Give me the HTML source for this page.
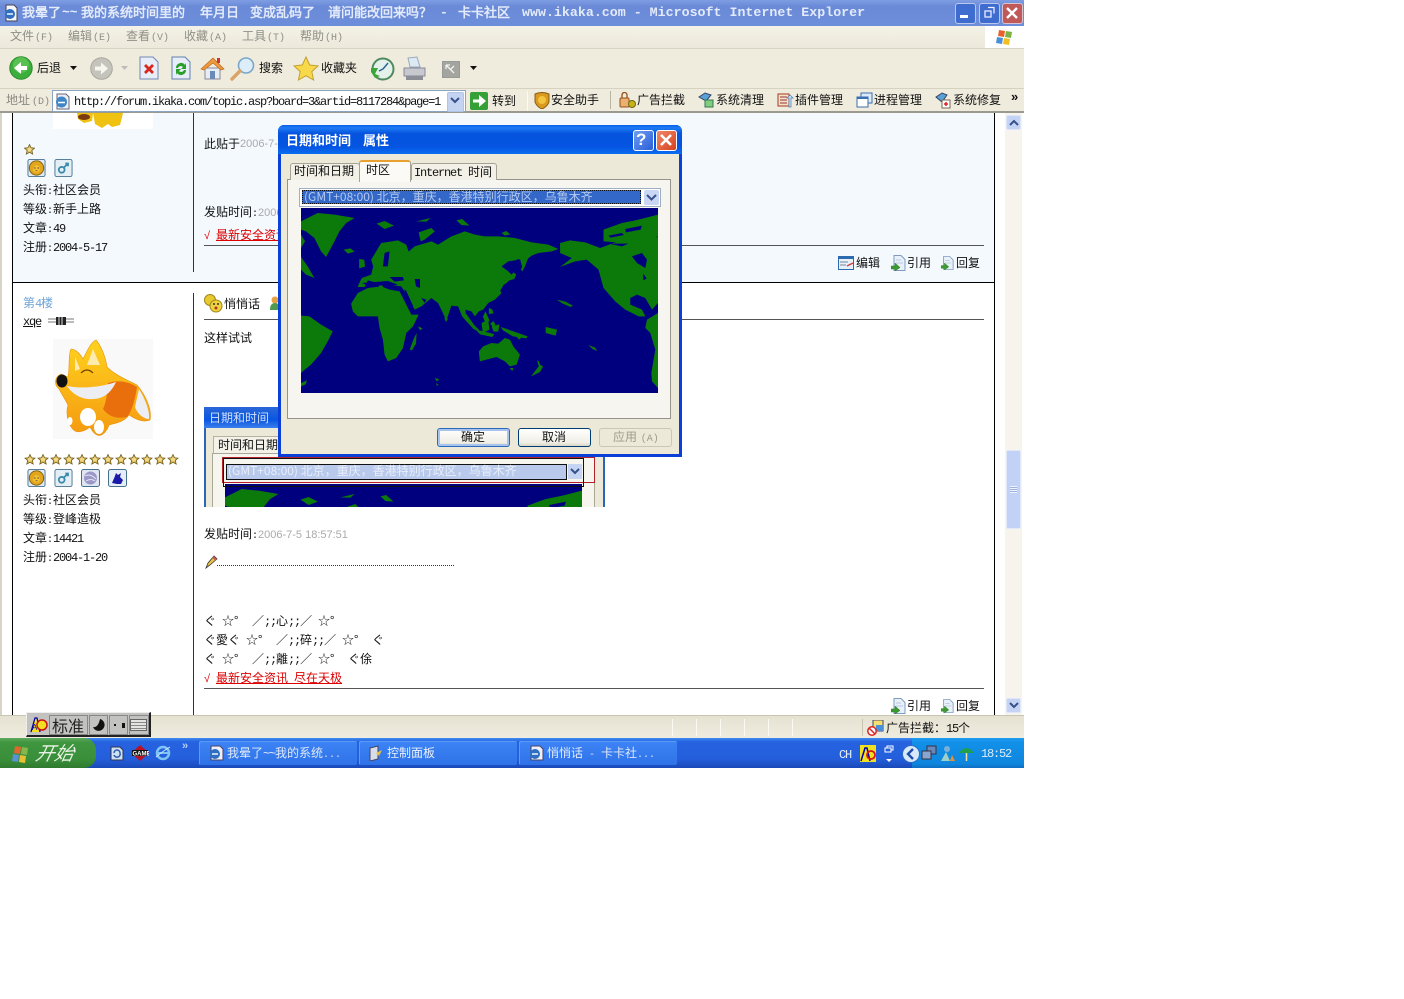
<!DOCTYPE html>
<html><head><meta charset="utf-8"><title>我晕了</title>
<style>
html,body{margin:0;padding:0;background:#fff;width:1404px;height:999px;overflow:hidden}
#s{position:absolute;left:0;top:0;width:1024px;height:768px;overflow:hidden;background:#fff}
#s div,#s span.t,#s svg{position:absolute}
.t{position:absolute;white-space:pre;font:12px/12px "WenQuanYi Zen Hei","Noto Sans CJK SC",sans-serif;color:#111}
.m{font-family:"Liberation Mono","WenQuanYi Zen Hei",monospace;font-size:12px;letter-spacing:-1.2px}
.k{font-family:"Liberation Mono",monospace;font-size:10px;letter-spacing:0;margin-left:1px}
.g{font:11px/12px "Liberation Sans",sans-serif;color:#aaa}
.r{color:#d00;text-decoration:underline}
.tt{font:bold 13px/13px "WenQuanYi Zen Hei",sans-serif;color:#e3eafa}
.tb{background:linear-gradient(#3d84f5,#2f72e8);border-radius:2px;height:24px;top:741px;width:158px;box-shadow:inset 1px 1px 0 #5a9bf8}
.btn{top:428px;height:17px;width:71px;border:1px solid #003c74;border-radius:3px;background:linear-gradient(#fff,#f0efe6 80%,#d8d5c6)}
</style></head><body>
<svg width="0" height="0" style="position:absolute">
<defs>
<symbol id="star" viewBox="0 0 12 12"><path d="M6 .5l1.7 3.6 3.8.4-2.9 2.6.9 3.9L6 9l-3.5 2 .9-3.9L.5 4.500l3.800-.4z" fill="#d9b54a" stroke="#6b5a20" stroke-width=".8"/><circle cx="6" cy="6" r="2.200" fill="#f2d98a"/></symbol>
<symbol id="lion" viewBox="0 0 20 20"><rect x=".5" y=".5" width="19" height="19" rx="2" fill="#dfeaf2" stroke="#46708f"/><circle cx="10" cy="10" r="8" fill="#e2a51c" stroke="#7a5a10"/><circle cx="10" cy="11" r="4" fill="#f2c22c"/><path d="M7 10h2M11 10h2M9 13h2" stroke="#744" stroke-width="1"/></symbol>
<symbol id="male" viewBox="0 0 20 20"><rect x=".5" y=".5" width="19" height="19" rx="2" fill="#e4eef5" stroke="#46708f"/><circle cx="8" cy="12" r="3.200" fill="none" stroke="#3a8aaa" stroke-width="2"/><path d="M10.500 9.500L15 5M12 5h3v3" fill="none" stroke="#3a8aaa" stroke-width="2"/></symbol>
<symbol id="doca" viewBox="0 0 15 16"><path d="M3 .5h7l4 4v11H3z" fill="#e8f0fa" stroke="#7f9bc0"/><path d="M5 5h5M5 8h7" stroke="#b8c8dd"/><path d="M0 11h4V8l5 4.500L4 16v-2H0z" fill="#3c9b30" stroke="#2b7a25" stroke-width=".5"/></symbol>
<linearGradient id="fg" x1="0" y1="0" x2="0" y2="1"><stop offset="0" stop-color="#ffd21e"/><stop offset="1" stop-color="#f59a10"/></linearGradient>
<symbol id="fox" viewBox="0 0 100 100"><rect width="100" height="100" fill="#f9f9f9"/>
<path d="M15 38C17 28 15 16 18 10 23 10 28 16 30 20 34 12 38 3 43 1 49 8 53 20 54 28 62 36 72 40 84 46 94 58 99 72 97 81 90 84 82 80 76 76 70 84 62 84 56 86 54 92 49 98 44 96 40 94 38 90 37 88 32 92 26 94 22 92 16 88 12 76 15 66 12 60 8 54 6 50 1 46 1 38 8 35z" fill="url(#fg)" stroke="#e8920a" stroke-width=".6"/>
<path d="M22 18L27 30 22 32zM40 10L47 26 34 26z" fill="#ffeab0"/>
<path d="M55 44C68 40 78 44 84 48 82 62 78 74 74 78 64 80 56 78 50 70 54 62 54 52 55 44z" fill="#e96f0c"/>
<path d="M14 47C30 50 48 48 63 43 58 54 50 60 40 60 30 61 20 56 14 47z" fill="#eceef4"/>
<path d="M86 50C92 60 97 72 96 80 90 80 84 74 82 68z" fill="#eceef4"/>
<ellipse cx="35" cy="78" rx="8" ry="9" fill="#fff"/><ellipse cx="46" cy="88" rx="5" ry="7" fill="#fff"/><ellipse cx="17" cy="82" rx="2.500" ry="4" fill="#fff"/>
<path d="M28 34q6-6 12 0" fill="none" stroke="#6a3c00" stroke-width="1.200"/>
<ellipse cx="9" cy="42" rx="5.500" ry="6.500" fill="#111"/></symbol>
<symbol id="map" viewBox="80 265 1068 555" preserveAspectRatio="none">
<rect x="80" y="265" width="1068" height="555" fill="#00007f"/>
<g fill="#0b7a0b">
<path d="M80 305L130 280 180 285 240 295 215 310 195 335 180 365 155 412 140 395 120 355 95 335 80 330z"/>
<path d="M80 412L100 440 120 475 95 465 80 450z"/>
<path d="M80 345L92 365 80 385z"/>
<path d="M208 390L228 386 240 396 220 402z"/>
<path d="M306 312L330 304 358 318 330 328z"/>
<path d="M432 338L470 325 480 335 450 360 438 365z"/><path d="M425 305L468 295 455 306z"/>
<path d="M545 302L562 298 584 318 560 316z"/>
<path d="M680 340L694 334 706 344 690 348z"/>
<path d="M252 495L262 475 290 465 296 440 290 420 320 370 370 362 395 375 402 396 420 380 470 365 490 375 530 350 570 335 600 345 630 350 670 350 720 355 770 368 820 375 850 388 830 395 790 400 770 408 755 420 745 450 735 420 700 425 680 440 700 455 715 470 695 490 670 505 680 520 660 540 640 550 625 570 612 575 600 590 590 575 572 570 575 605 562 590 550 560 530 558 515 602 490 550 470 535 440 560 420 570 395 525 380 500 345 495 310 490 280 482 270 502 250 502z"/>
<path d="M230 552L250 520 280 505 320 500 345 510 375 515 395 555 410 585 432 585 415 620 395 640 385 685 365 715 340 725 330 705 325 660 315 625 310 590 280 590 250 590 235 575z"/>
<path d="M405 690L418 655 426 640 424 672 412 692z"/>
<path d="M612 695L625 680 650 670 670 672 690 655 705 660 715 680 735 705 725 735 705 740 690 725 665 712 635 720 615 725z"/>
<path d="M704 745L716 745 712 754z"/>
<path d="M80 588L105 590 140 615 175 635 160 665 140 700 110 735 85 755 80 760z"/>
<path d="M80 790L98 782 94 794 80 800z"/>
<path d="M855 370L885 362 930 368 975 385 1020 368 1148 352V550L1130 570 1110 535 1085 525 1065 535 1065 555 1100 570 1110 590 1090 590 1050 570 1020 545 985 505 970 450 935 420 900 425 855 442 890 415 855 400z"/>
<path d="M985 330L1040 310 1090 300 1148 285V350L1110 365 1050 370 985 365z"/>
<path d="M1115 600L1148 580V805L1130 785 1128 760 1140 690 1125 640 1110 625z"/>
<path d="M768 770L795 735 804 740 795 757z"/>
<path d="M786 722L792 725 798 744 792 742z"/>
<path d="M738 450L752 412 760 414 750 440 742 455zM700 475L716 458 724 464 718 478 704 482zM664 510L680 492 686 496 672 520zM682 470L690 455 694 468 684 476z"/>
<path d="M642 565L652 569 656 581 642 583zM632 575L644 603 634 615 624 591zM646 612L656 604 662 616 654 622z"/>
<path d="M552 565L576 585 598 616 614 632 598 630 574 604 556 572z"/>
<path d="M602 630L646 640 658 644 652 652 616 644zM620 610L640 600 644 630 624 640zM650 620L674 614 670 636 656 636zM678 622L724 638 758 650 754 656 714 650 684 632zM724 650L742 652 732 660z"/>
<path d="M508 594L520 597 514 607z"/>
<path d="M254 418L268 420 280 438 254 446zM310 490L320 486 326 504 314 502z"/>
<path d="M845 540L871 546 893 558 887 562 863 552zM940 676L960 684 966 694 952 688zM835 630L843 638 837 644zM812 622L846 630 842 648 812 640z"/>
<path d="M430 620L444 626 436 632zM480 775L494 779 486 785zM484 790L492 796 486 798z"/>
</g>
<g fill="#00007f">
<path d="M1070 410L1100 400 1115 420 1110 445 1085 430zM1000 348L1040 340 1046 346 1006 354zM1050 328L1100 318 1096 330 1052 338zM1000 372L1060 372 1040 380zM1104 462L1114 476 1104 482z"/>
<path d="M345 472L385 472 388 482 360 486zM420 478L436 478 436 505 424 500zM330 400L345 395 340 440 325 440zM268 405L285 402 290 435 272 448z"/>
<path d="M262 490L340 484 370 495 345 498 280 497zM388 510L394 512 416 560 410 562zM440 535L455 540 450 550z"/>
<path d="M700 432L730 418 738 422 716 440z"/>
</g>
</symbol>
</defs></svg>
<div id="s">

<!-- title bar -->
<div style="left:0;top:0;width:1024px;height:26px;background:linear-gradient(#7e9de3 0,#6a8ad8 25%,#6d8edb 100%);"></div>
<svg style="left:3px;top:4px" width="16" height="18"><path d="M3 1h8l3 3v13H3z" fill="#f4f6fb" stroke="#445"/><circle cx="7" cy="10" r="5" fill="#2f6fbf"/><path d="M4 10h6" stroke="#fff" stroke-width="1.400"/></svg>
<span class="t tt" style="left:22px;top:6px">我晕了</span>
<span class="t tt" style="left:62px;top:6px;font-family:'Liberation Mono',monospace">~~</span>
<span class="t tt" style="left:81px;top:6px">我的系统时间里的</span>
<span class="t tt" style="left:200px;top:6px">年月日</span>
<span class="t tt" style="left:250px;top:6px">变成乱码了</span>
<span class="t tt" style="left:328px;top:6px">请问能改回来吗？</span>
<span class="t tt" style="left:440px;top:6px;font-family:'Liberation Mono',monospace">-</span>
<span class="t tt" style="left:458px;top:6px">卡卡社区</span>
<span class="t tt" style="left:522px;top:6px;font:bold 13.300px/13px 'Liberation Mono',monospace">www.ikaka.com - Microsoft Internet Explorer</span>
<div style="left:955px;top:3px;width:19px;height:19px;border-radius:3px;background:#3f6ccf;border:1px solid #b9c8ec"></div>
<div style="left:960px;top:15px;width:8px;height:3px;background:#fff"></div>
<div style="left:979px;top:3px;width:19px;height:19px;border-radius:3px;background:#3f6ccf;border:1px solid #b9c8ec"></div>
<svg style="left:982px;top:6px" width="15" height="15"><path d="M6 1.500h6v6M3 5h6v6H3z" fill="none" stroke="#eef" stroke-width="1.300"/></svg>
<div style="left:1002px;top:3px;width:19px;height:19px;border-radius:3px;background:#c05a5a;border:1px solid #d8c4cc"></div>
<svg style="left:1005px;top:6px" width="15" height="15"><path d="M2 2l10 10M12 2L2 12" stroke="#fff" stroke-width="2.400"/></svg>

<!-- menu -->
<div style="left:0;top:26px;width:1024px;height:23px;background:linear-gradient(#f4f2e7,#ece8da)"></div>
<div style="left:0;top:48px;width:1024px;height:1px;background:#d8d4c4"></div>
<span class="t" style="left:10px;top:30px;color:#8f8f86">文件<span class="k">(F)</span></span>
<span class="t" style="left:68px;top:30px;color:#8f8f86">编辑<span class="k">(E)</span></span>
<span class="t" style="left:126px;top:30px;color:#8f8f86">查看<span class="k">(V)</span></span>
<span class="t" style="left:184px;top:30px;color:#8f8f86">收藏<span class="k">(A)</span></span>
<span class="t" style="left:242px;top:30px;color:#8f8f86">工具<span class="k">(T)</span></span>
<span class="t" style="left:300px;top:30px;color:#8f8f86">帮助<span class="k">(H)</span></span>
<div style="left:985px;top:26px;width:39px;height:22px;background:#fff"></div>
<svg style="left:995px;top:27px" width="20" height="20"><path d="M4 3l6 1-1 6-6-1z" fill="#e8612c"/><path d="M11 4l6 1-1 6-6-1z" fill="#7cb342"/><path d="M2 10l6 1-1 6-6-1z" fill="#4a90d9"/><path d="M9 11l6 1-1 6-6-1z" fill="#f4c020"/></svg>

<!-- toolbar -->
<div style="left:0;top:49px;width:1024px;height:39px;background:#f0ecdd"></div>
<svg style="left:9px;top:56px" width="24" height="24"><circle cx="12" cy="12" r="11.200" fill="#3cae3c" stroke="#2a8a2a"/><circle cx="12" cy="9" r="8" fill="#62c95a" opacity=".7"/><path d="M18 10v4h-6v4l-7-6 7-6v4z" fill="#fff"/></svg>
<span class="t" style="left:37px;top:62px">后退</span>
<svg style="left:70px;top:66px" width="7" height="4"><path d="M0 0h7L3.500 4z" fill="#111"/></svg>
<svg style="left:90px;top:57px" width="23" height="23"><circle cx="11.500" cy="11.500" r="10.800" fill="#c4c4bc" stroke="#a8a89f"/><path d="M5 9.500h6v-4l7 6-7 6v-4H5z" fill="#f6f6f0"/></svg>
<svg style="left:121px;top:66px" width="7" height="4"><path d="M0 0h7L3.500 4z" fill="#bbb"/></svg>
<svg style="left:139px;top:56px" width="20" height="24"><path d="M1 1h13l5 5v17H1z" fill="#e8eef8" stroke="#6f87b8"/><path d="M6 9l8 8M14 9l-8 8" stroke="#d9261c" stroke-width="2.800"/></svg>
<svg style="left:171px;top:56px" width="20" height="24"><path d="M1 1h13l5 5v17H1z" fill="#e8eef8" stroke="#5f7fb0"/><path d="M5 12a5 5 0 0 1 9-3l1-2v6h-5l2-2a3 3 0 0 0-5 1zM15 14a5 5 0 0 1-9 3l-1 2v-6h5l-2 2a3 3 0 0 0 5-1z" fill="#2aa02a"/></svg>
<svg style="left:200px;top:56px" width="25" height="25"><path d="M5 12v11h15V12z" fill="#e6edf5" stroke="#889"/><path d="M1 13L13 2l11 11-3 1-8-7-9 7z" fill="#ee9a3a" stroke="#b86a20" stroke-width=".7"/><rect x="10" y="15" width="5" height="8" fill="#6b8ab8"/><rect x="17" y="2" width="3" height="5" fill="#c33"/></svg>
<svg style="left:230px;top:56px" width="25" height="26"><circle cx="16" cy="9.500" r="7.500" fill="#dbeefa" stroke="#7ba6c8" stroke-width="1.600"/><path d="M10 15L2 23" stroke="#d9a36a" stroke-width="3.500" stroke-linecap="round"/></svg>
<span class="t" style="left:259px;top:62px">搜索</span>
<svg style="left:293px;top:56px" width="26" height="25"><path d="M13 1l3.700 8 8.300.900-6.200 5.700 1.800 8.400-7.600-4.300-7.600 4.300 1.800-8.400L1 9.900 9.300 9z" fill="#f8d94a" stroke="#c2a030"/></svg>
<span class="t" style="left:321px;top:62px">收藏夹</span>
<svg style="left:370px;top:57px" width="25" height="24"><circle cx="13" cy="12" r="10.500" fill="#e4f0ea" stroke="#4f8a5f" stroke-width="2"/><path d="M13 12l5-6M13 12l-4 2" stroke="#27618f" stroke-width="1.400"/><path d="M1 11l7 0-3 6 5 2-5 2-4-6z" fill="#3aa63a"/></svg>
<svg style="left:402px;top:56px" width="25" height="25"><path d="M6 2l9-1 3 10H8z" fill="#dde8f5" stroke="#9ab"/><path d="M2 12h21v8H2z" fill="#c8c9ce" stroke="#889"/><path d="M4 20h17v4H4z" fill="#8b8e94"/></svg>
<div style="left:442px;top:61px;width:16px;height:15px;background:#a5a5a0;border:1px solid #999"></div>
<svg style="left:444px;top:63px" width="13" height="13"><path d="M2 2l8 8M2 2h4M2 2v4M10 3L7 6" stroke="#f2f2f0" stroke-width="1.300" fill="none"/></svg>
<svg style="left:470px;top:66px" width="7" height="4"><path d="M0 0h7L3.500 4z" fill="#111"/></svg>

<!-- address -->
<div style="left:0;top:88px;width:1024px;height:25px;background:#efebdd;border-top:1px solid #d6d2c2;box-sizing:border-box;border-bottom:2px solid #9a9a90"></div>
<span class="t" style="left:6px;top:94px;color:#8a8a80">地址<span class="k" style="margin-left:2px">(D)</span></span>
<div style="left:52px;top:90px;width:412px;height:20px;background:#fff;border:1px solid #8ba4c2"></div>
<svg style="left:54px;top:93px" width="17" height="17"><path d="M3 1h9l3 3v12H3z" fill="#e9eef7" stroke="#667"/><circle cx="7.500" cy="9" r="5.500" fill="#3f86c9"/><path d="M4 9.500h7" stroke="#fff" stroke-width="1.500"/></svg>
<span class="t m" style="left:74px;top:96px">http://forum.ikaka.com/topic.asp?board=3&amp;artid=8117284&amp;page=1</span>
<div style="left:447px;top:92px;width:15px;height:18px;border-radius:2px;background:#c4d3f2;border:1px solid #b0c4e8"></div>
<svg style="left:450px;top:97px" width="10" height="8"><path d="M1 1l4 4 4-4" fill="none" stroke="#35508a" stroke-width="2"/></svg>
<svg style="left:470px;top:92px" width="18" height="18"><rect width="18" height="18" rx="2" fill="#35a035"/><path d="M3 7.500h6V3l7 6-7 6v-4.500H3z" fill="#fff"/></svg>
<span class="t" style="left:492px;top:95px">转到</span>
<div style="left:527px;top:91px;width:1px;height:20px;background:#fbfaf5"></div>
<svg style="left:534px;top:92px" width="16" height="17"><path d="M1 2q7-3 14 0v8q-2 5-7 7-5-2-7-7z" fill="#d99a1e" stroke="#8a5a10"/><circle cx="8" cy="8" r="4" fill="#f3c440"/></svg>
<span class="t" style="left:551px;top:94px">安全助手</span>
<div style="left:610px;top:91px;width:1px;height:18px;background:#b8b5a6"></div>
<svg style="left:619px;top:92px" width="17" height="16"><rect x="1" y="6" width="9" height="9" rx="1" fill="#eab070" stroke="#94501c"/><path d="M3 6V3a2.500 2.500 0 0 1 5 0v3" fill="none" stroke="#94501c" stroke-width="1.300"/><circle cx="13" cy="12" r="3.500" fill="#c8b418" stroke="#6a6a10"/></svg>
<span class="t" style="left:637px;top:94px">广告拦截</span>
<svg style="left:698px;top:92px" width="16" height="16"><path d="M1 5l6-4 6 2-5 6z" fill="#5a9fd6" stroke="#346"/><rect x="7" y="8" width="8" height="7" fill="#7fcf7f" stroke="#375"/></svg>
<span class="t" style="left:716px;top:94px">系统清理</span>
<svg style="left:777px;top:92px" width="17" height="17"><rect x="1" y="2" width="11" height="12" fill="#f4e3c8" stroke="#a33a20"/><path d="M3 5h7M3 8h7M3 11h7" stroke="#933"/><path d="M13 3l3 3h-2v9h-2V6h-2z" fill="#cfe3fa" stroke="#4a7ab0" stroke-width=".7"/></svg>
<span class="t" style="left:795px;top:94px">插件管理</span>
<svg style="left:856px;top:92px" width="17" height="16"><rect x="5" y="1" width="11" height="10" fill="#dceafa" stroke="#3a6fb0"/><rect x="1" y="5" width="11" height="10" fill="#fff" stroke="#3a6fb0"/><rect x="1" y="5" width="11" height="2" fill="#3a6fb0"/></svg>
<span class="t" style="left:874px;top:94px">进程管理</span>
<svg style="left:935px;top:92px" width="17" height="17"><path d="M1 5l6-4 5 2-5 7z" fill="#5a9fd6" stroke="#346"/><rect x="7" y="8" width="8" height="8" fill="#fff" stroke="#765"/><path d="M11 10v4M9 12h4" stroke="#d22" stroke-width="1.500"/></svg>
<span class="t" style="left:953px;top:94px">系统修复</span>
<span class="t" style="left:1011px;top:90px;font:bold 13px/13px 'Liberation Sans',sans-serif">»</span>

<!-- content -->
<div style="left:0;top:113px;width:1024px;height:602px;background:#fff"></div>
<div style="left:0;top:113px;width:2px;height:602px;background:#d8d5c8"></div>
<div style="left:13px;top:113px;width:981px;height:169px;background:#f4f9fe"></div>
<div style="left:12px;top:113px;width:1px;height:602px;background:#000"></div>
<div style="left:994px;top:113px;width:1px;height:602px;background:#000"></div>
<div style="left:13px;top:282px;width:981px;height:1px;background:#000"></div>
<div style="left:193px;top:113px;width:1px;height:159px;background:#333"></div>
<div style="left:193px;top:293px;width:1px;height:422px;background:#333"></div>

<!-- post 1 left -->
<div style="left:53px;top:113px;width:100px;height:16px;background:#fff"></div>
<svg style="left:75px;top:113px" width="50" height="16"><path d="M2 0h16l-1 8-8 2-6-4zM18 0h30l-3 12-8 2-4-3-6 4-7-4z" fill="#efc110"/><ellipse cx="9" cy="4" rx="6" ry="3" fill="#7a3a12"/></svg>
<svg style="left:24px;top:144px" width="11" height="11"><use href="#star"/></svg>
<svg style="left:27px;top:159px" width="19" height="18"><use href="#lion"/></svg>
<svg style="left:54px;top:159px" width="19" height="18"><use href="#male"/></svg>
<span class="t" style="left:23px;top:184px">头衔<span class="m" style="letter-spacing:0;font-size:10px">:</span>社区会员</span>
<span class="t" style="left:23px;top:203px">等级<span class="m" style="letter-spacing:0;font-size:10px">:</span>新手上路</span>
<span class="t" style="left:23px;top:222px">文章<span class="m" style="letter-spacing:0;font-size:10px">:</span><span class="m">49</span></span>
<span class="t" style="left:23px;top:241px">注册<span class="m" style="letter-spacing:0;font-size:10px">:</span><span class="m">2004-5-17</span></span>

<!-- post 1 right -->
<span class="t" style="left:204px;top:138px">此贴于</span>
<span class="t g" style="left:240px;top:138px">2006-7-5</span>
<span class="t" style="left:204px;top:206px">发贴时间<span class="m" style="letter-spacing:0;font-size:10px">:</span></span>
<span class="t g" style="left:258px;top:207px">2006</span>
<span class="t r" style="left:204px;top:229px"><span style="font:11px/12px 'Liberation Sans',sans-serif;display:inline-block;width:12px">√</span>最新安全资讯</span>
<div style="left:204px;top:245px;width:780px;height:1px;background:#555"></div>
<svg style="left:838px;top:256px" width="16" height="14"><rect x=".5" y=".5" width="15" height="13" fill="#e8f0fa" stroke="#2d6bb0"/><rect width="16" height="3" fill="#2d6bb0"/><path d="M2 6h8M2 9h6" stroke="#789"/><path d="M9 10l6-3" stroke="#c44" stroke-width="1.500"/></svg>
<span class="t" style="left:856px;top:257px">编辑</span>
<svg style="left:891px;top:255px" width="15" height="16"><use href="#doca"/></svg>
<span class="t" style="left:907px;top:257px">引用</span>
<svg style="left:941px;top:256px" width="13" height="14"><use href="#doca"/></svg>
<span class="t" style="left:956px;top:257px">回复</span>

<!-- post 2 left -->
<span class="t" style="left:23px;top:297px;color:#6fa4d6">第<span class="m" style="color:#6fa4d6">4</span>楼</span>
<span class="t m" style="left:23px;top:316px;text-decoration:underline">xqe</span>
<svg style="left:48px;top:316px" width="27" height="10"><path d="M0 3h8M0 6h8M18 3h8M18 6h8" stroke="#777"/><rect x="8" y="1" width="10" height="8" fill="#222"/><path d="M11 1v8M14 1v8" stroke="#ddd"/></svg>
<svg style="left:53px;top:339px" width="100" height="100"><use href="#fox"/></svg>
<svg style="left:24px;top:454px" width="12" height="11"><use href="#star"/></svg>
<svg style="left:37px;top:454px" width="12" height="11"><use href="#star"/></svg>
<svg style="left:50px;top:454px" width="12" height="11"><use href="#star"/></svg>
<svg style="left:63px;top:454px" width="12" height="11"><use href="#star"/></svg>
<svg style="left:76px;top:454px" width="12" height="11"><use href="#star"/></svg>
<svg style="left:89px;top:454px" width="12" height="11"><use href="#star"/></svg>
<svg style="left:102px;top:454px" width="12" height="11"><use href="#star"/></svg>
<svg style="left:115px;top:454px" width="12" height="11"><use href="#star"/></svg>
<svg style="left:128px;top:454px" width="12" height="11"><use href="#star"/></svg>
<svg style="left:141px;top:454px" width="12" height="11"><use href="#star"/></svg>
<svg style="left:154px;top:454px" width="12" height="11"><use href="#star"/></svg>
<svg style="left:167px;top:454px" width="12" height="11"><use href="#star"/></svg>
<svg style="left:27px;top:469px" width="19" height="18"><use href="#lion"/></svg>
<svg style="left:54px;top:469px" width="19" height="18"><use href="#male"/></svg>
<svg style="left:81px;top:469px" width="19" height="18"><rect x=".5" y=".5" width="18" height="17" rx="2" fill="#dfe6f2" stroke="#46708f"/><circle cx="9.500" cy="9" r="6.500" fill="#9a98c8"/><path d="M4 7q5-3 11 3M5 12q5-3 9 0" fill="none" stroke="#e4e4f2"/></svg>
<svg style="left:108px;top:469px" width="19" height="18"><rect x=".5" y=".5" width="18" height="17" rx="2" fill="#e6edf6" stroke="#46708f"/><path d="M4 14l3-7 1-3 2 2 3-2-1 4 3 3-2 4H9z" fill="#1a1aa8"/></svg>
<span class="t" style="left:23px;top:494px">头衔<span class="m" style="letter-spacing:0;font-size:10px">:</span>社区会员</span>
<span class="t" style="left:23px;top:513px">等级<span class="m" style="letter-spacing:0;font-size:10px">:</span>登峰造极</span>
<span class="t" style="left:23px;top:532px">文章<span class="m" style="letter-spacing:0;font-size:10px">:</span><span class="m">14421</span></span>
<span class="t" style="left:23px;top:551px">注册<span class="m" style="letter-spacing:0;font-size:10px">:</span><span class="m">2004-1-20</span></span>

<!-- post 2 right -->
<svg style="left:204px;top:294px" width="19" height="19"><circle cx="6" cy="6" r="5.500" fill="#e8c930" stroke="#a0861a"/><circle cx="12" cy="12" r="6" fill="#f0d23a" stroke="#a0861a"/><circle cx="10" cy="10" r="1" fill="#333"/><circle cx="14" cy="10" r="1" fill="#333"/><circle cx="12" cy="14" r="1.500" fill="#a33"/></svg>
<span class="t" style="left:224px;top:298px">悄悄话</span>
<svg style="left:270px;top:295px" width="10" height="16"><circle cx="5" cy="5" r="3.500" fill="#e8a040"/><path d="M0 15q0-7 5-7t5 7z" fill="#4f9a4f"/></svg>
<div style="left:204px;top:319px;width:780px;height:1px;background:#555"></div>
<span class="t" style="left:204px;top:332px">这样试试</span>

<!-- inner screenshot -->
<div style="left:204px;top:407px;width:401px;height:100px;background:#ece9d8;overflow:hidden">
  <div style="left:0;top:0;width:401px;height:21px;background:linear-gradient(#2a68d8,#0a55e0 60%,#3a80ee)"></div>
  <span class="t" style="left:5px;top:5px;color:#cfe0fa">日期和时间</span>
  <div style="left:0;top:21px;width:2px;height:79px;background:#2a66b8"></div>
  <div style="right:0;top:21px;width:2px;height:79px;background:#2a66b8"></div>
  <div style="left:9px;top:29px;width:70px;height:17px;background:#f4f2e8;border:1px solid #b5b2a0;border-bottom:0"></div>
  <span class="t" style="left:14px;top:32px">时间和日期</span>
  <div style="left:8px;top:46px;width:381px;height:54px;background:#f6f5ee;border:1px solid #a9a796;border-bottom:0"></div>
  <svg style="left:21px;top:77px" width="357" height="185"><use href="#map" width="357" height="185"/></svg>
  <div style="left:18px;top:50px;width:373px;height:26px;border:1px solid #b3202a;box-sizing:border-box"></div>
  <div style="left:19px;top:51px;width:361px;height:29px;border:1px solid #111;box-sizing:border-box"></div>
  <div style="left:22px;top:57px;width:339px;height:14px;background:#b8c9ec;border:1px solid #111"></div>
  <span class="t" style="left:24px;top:58px;color:#e8eefa;font-size:12px">(GMT+08:00) 北京，重庆，香港特别行政区，乌鲁木齐</span>
  <div style="left:364px;top:57px;width:14px;height:15px;background:#c5d4f2"></div>
  <svg style="left:366px;top:61px" width="10" height="7"><path d="M1 1l4 4 4-4" fill="none" stroke="#35508a" stroke-width="2"/></svg>
</div>

<span class="t" style="left:204px;top:528px">发贴时间<span class="m" style="letter-spacing:0;font-size:10px">:</span></span>
<span class="t g" style="left:258px;top:529px">2006-7-5 18:57:51</span>
<svg style="left:205px;top:555px" width="13" height="14"><path d="M1 13l2-5 6-7 3 3-7 6z" fill="#e8c24a" stroke="#333" stroke-width=".8"/><path d="M8 2l3 3" stroke="#c55" stroke-width="2"/></svg>
<div style="left:217px;top:565px;width:237px;height:1px;background-image:linear-gradient(90deg,#333 50%,transparent 50%);background-size:2px 1px"></div>
<span class="t" style="left:204px;top:615px">ぐ</span><span class="t" style="left:222px;top:615px">☆°</span><span class="t" style="left:252px;top:615px">／<span class="m">;;</span>心<span class="m">;;</span>／</span><span class="t" style="left:318px;top:615px">☆°</span>
<span class="t" style="left:204px;top:634px">ぐ愛ぐ</span><span class="t" style="left:246px;top:634px">☆°</span><span class="t" style="left:276px;top:634px">／<span class="m">;;</span>碎<span class="m">;;</span>／</span><span class="t" style="left:342px;top:634px">☆°</span><span class="t" style="left:372px;top:634px">ぐ</span>
<span class="t" style="left:204px;top:653px">ぐ</span><span class="t" style="left:222px;top:653px">☆°</span><span class="t" style="left:252px;top:653px">／<span class="m">;;</span>離<span class="m">;;</span>／</span><span class="t" style="left:318px;top:653px">☆°</span><span class="t" style="left:348px;top:653px">ぐ俆</span>
<span class="t r" style="left:204px;top:672px"><span style="font:11px/12px 'Liberation Sans',sans-serif;display:inline-block;width:12px">√</span>最新安全资讯&ensp;尽在天极</span>
<div style="left:204px;top:688px;width:780px;height:1px;background:#555"></div>
<svg style="left:891px;top:698px" width="15" height="16"><use href="#doca"/></svg>
<span class="t" style="left:907px;top:700px">引用</span>
<svg style="left:941px;top:699px" width="13" height="14"><use href="#doca"/></svg>
<span class="t" style="left:956px;top:700px">回复</span>

<!-- scrollbar -->
<div style="left:1005px;top:113px;width:17px;height:602px;background:#f6f4ec"></div>
<div style="left:1006px;top:115px;width:15px;height:15px;background:#c4d3f4;border-radius:2px;border:1px solid #dfe8fa;box-sizing:border-box"></div>
<svg style="left:1009px;top:119px" width="10" height="7"><path d="M1 6l4-4 4 4" fill="none" stroke="#35508a" stroke-width="2"/></svg>
<div style="left:1006px;top:450px;width:15px;height:79px;background:#c2d2f6;border-radius:2px;border:1px solid #e2e9f8;box-sizing:border-box"></div>
<div style="left:1010px;top:486px;width:7px;height:7px;background:repeating-linear-gradient(#eef3fd 0 1px,#9db2de 1px 2px)"></div>
<div style="left:1006px;top:698px;width:15px;height:15px;background:#c4d3f4;border-radius:2px;border:1px solid #dfe8fa;box-sizing:border-box"></div>
<svg style="left:1009px;top:702px" width="10" height="7"><path d="M1 1l4 4 4-4" fill="none" stroke="#35508a" stroke-width="2"/></svg>

<!-- status -->
<div style="left:0;top:715px;width:1024px;height:23px;background:linear-gradient(#e6e2d2,#efecdf);border-top:1px solid #c9c5b4;box-sizing:border-box"></div>
<div style="left:672px;top:719px;width:1px;height:17px;background:#fbfaf2"></div>
<div style="left:696px;top:719px;width:1px;height:17px;background:#fbfaf2"></div>
<div style="left:720px;top:719px;width:1px;height:17px;background:#fbfaf2"></div>
<div style="left:744px;top:719px;width:1px;height:17px;background:#fbfaf2"></div>
<div style="left:768px;top:719px;width:1px;height:17px;background:#fbfaf2"></div>
<div style="left:792px;top:719px;width:1px;height:17px;background:#fbfaf2"></div>
<div style="left:862px;top:719px;width:1px;height:17px;background:#c8c4b2"></div>
<svg style="left:867px;top:720px" width="17" height="16"><rect x="6" y="0" width="10" height="11" fill="#f5df70" stroke="#446"/><rect x="9" y="5" width="7" height="6" fill="#4a90d9"/><circle cx="5" cy="11" r="4.200" fill="#fff" stroke="#d22" stroke-width="1.500"/><path d="M2 8l6 6" stroke="#d22" stroke-width="1.500"/></svg>
<span class="t" style="left:886px;top:722px">广告拦截：<span class="m">15</span>个</span>

<!-- IME -->
<div style="left:26px;top:712px;width:125px;height:25px;background:#c2c2c0;border:1px solid #eee;border-right:2px solid #222;border-bottom:2px solid #222;box-sizing:border-box"></div>
<svg style="left:30px;top:716px" width="18" height="18"><path d="M1 16L5 2h2l3 14" fill="#f0e020" stroke="#00a" stroke-width="1.300"/><circle cx="12" cy="9" r="5" fill="#f0e020" stroke="#c11" stroke-width="1.500"/><text x="2" y="14" font-size="8" font-family="Liberation Sans" fill="#00a">A</text></svg>
<div style="left:49px;top:715px;width:39px;height:20px;background:#c2c2c0;border:1px solid #888;box-sizing:border-box"></div>
<span class="t" style="left:52px;top:716px;font-size:16px;line-height:18px;color:#222">标准</span>
<div style="left:89px;top:715px;width:19px;height:20px;background:#c2c2c0;border:1px solid #888;box-sizing:border-box"></div>
<svg style="left:91px;top:717px" width="15" height="16"><path d="M9 2a6 6 0 1 1-7 8q5 1 7-8z" fill="#111"/></svg>
<div style="left:109px;top:715px;width:19px;height:20px;background:#c2c2c0;border:1px solid #888;box-sizing:border-box"></div>
<div style="left:114px;top:724px;width:2px;height:2px;background:#111"></div>
<div style="left:122px;top:723px;width:3px;height:5px;background:#111"></div>
<div style="left:129px;top:715px;width:20px;height:20px;background:#c2c2c0;border:1px solid #888;box-sizing:border-box"></div>
<div style="left:130px;top:719px;width:17px;height:12px;background:repeating-linear-gradient(#e4e4e2 0 2px,#888 2px 3px);border:1px solid #666;box-sizing:border-box"></div>

<!-- taskbar -->
<div style="left:0;top:738px;width:1024px;height:30px;background:linear-gradient(#3f8cf3 0,#2663e0 12%,#245edb 70%,#1a49b8 100%)"></div>
<div style="left:0;top:738px;width:96px;height:30px;border-radius:0 12px 12px 0;background:linear-gradient(#5fa95f 0,#3f963f 15%,#3a8f3a 70%,#2f7a2f 100%)"></div>
<svg style="left:11px;top:744px" width="19" height="19"><path d="M4 2l6 1-1 7-6-1z" fill="#e0672e"/><path d="M11 3l6 1-1 7-6-1z" fill="#84b84c"/><path d="M2 10l6 1-1 7-6-1z" fill="#5a92d4"/><path d="M9 11l6 1-1 7-6-1z" fill="#e8c030"/></svg>
<span class="t" style="left:36px;top:742px;font:italic 19px/22px 'WenQuanYi Zen Hei','Noto Sans CJK SC',sans-serif;color:#e8f2e4;transform:skewX(-12deg)">开始</span>
<svg style="left:109px;top:745px" width="15" height="16"><path d="M2 2h9l3 3v10H2z" fill="#cfe0f5" stroke="#335"/><path d="M5 8a3 3 0 0 1 6 0M11 8a3 3 0 0 1-6 2" stroke="#2a5ea8" fill="none" stroke-width="1.500"/></svg>
<svg style="left:131px;top:745px" width="18" height="16"><path d="M9 0l9 8-9 8-9-8z" fill="#b12"/><rect x="1" y="5" width="16" height="6" fill="#111"/><text x="1.500" y="10.500" font-size="6" font-family="Liberation Sans" font-weight="bold" fill="#fff">GAME</text></svg>
<svg style="left:155px;top:745px" width="16" height="16"><circle cx="8" cy="8" r="6" fill="none" stroke="#7fc4f5" stroke-width="2.500"/><path d="M3 8h10" stroke="#7fc4f5" stroke-width="2"/><path d="M1 12Q8 6 15 2" stroke="#c9e6fa" fill="none"/></svg>
<span class="t" style="left:182px;top:741px;font:bold 11px/11px 'Liberation Sans',sans-serif;color:#b7d0f5">»</span>
<div class="tb" style="left:199px"></div><div class="tb" style="left:359px"></div><div class="tb" style="left:519px"></div>
<svg style="left:208px;top:745px" width="16" height="16"><path d="M3 1h9l3 3v11H3z" fill="#eef" stroke="#446"/><circle cx="7" cy="9" r="5" fill="#2f6fbf"/><path d="M4 9h6" stroke="#fff" stroke-width="1.400"/></svg>
<span class="t" style="left:227px;top:747px;color:#dfe9fb">我晕了<span class="m" style="color:#dfe9fb">~~</span>我的系统<span class="m" style="color:#dfe9fb;letter-spacing:0;font-size:10px">...</span></span>
<svg style="left:368px;top:745px" width="15" height="16"><path d="M2 3l8-2v13l-8 2z" fill="#d8dee8" stroke="#446"/><path d="M8 8l6-3-3 6z" fill="#e8c040"/></svg>
<span class="t" style="left:387px;top:747px;color:#e9f0fc">控制面板</span>
<svg style="left:528px;top:745px" width="16" height="16"><path d="M3 1h9l3 3v11H3z" fill="#eef" stroke="#446"/><circle cx="7" cy="9" r="5" fill="#2f6fbf"/><path d="M4 9h6" stroke="#fff" stroke-width="1.400"/></svg>
<span class="t" style="left:547px;top:747px;color:#dfe9fb">悄悄话<span class="m" style="color:#dfe9fb;letter-spacing:0;font-size:10px"> - </span>卡卡社<span class="m" style="color:#dfe9fb;letter-spacing:0;font-size:10px">...</span></span>
<span class="t m" style="left:839px;top:749px;color:#e6eefb">CH</span>
<svg style="left:860px;top:745px" width="16" height="17"><rect width="16" height="17" fill="#f0e020"/><path d="M1 16L5 3h2l3 13" fill="none" stroke="#00a" stroke-width="1.500"/><circle cx="11" cy="10" r="4" fill="none" stroke="#d11" stroke-width="1.800"/></svg>
<svg style="left:884px;top:745px" width="10" height="18"><rect x="3" y="1" width="6" height="4" fill="none" stroke="#fff"/><rect x="1" y="3" width="6" height="4" fill="#245edb" stroke="#fff"/><path d="M2 14h6l-3 3z" fill="#fff"/></svg>
<div style="left:912px;top:738px;width:112px;height:30px;background:linear-gradient(#1d9cf0,#1290e8 15%,#0f86de 85%,#0e6fc2)"></div>
<svg style="left:902px;top:745px" width="18" height="18"><circle cx="9" cy="9" r="8.500" fill="#d8e9fb" stroke="#2d6bc8"/><path d="M11 4L6 9l5 5" fill="none" stroke="#1e4fa8" stroke-width="2.400"/></svg>
<svg style="left:921px;top:745px" width="16" height="16"><rect x="6" y="1" width="9" height="8" fill="#6a88b8" stroke="#334"/><rect x="1" y="6" width="9" height="8" fill="#8aa5cf" stroke="#334"/></svg>
<svg style="left:940px;top:745px" width="16" height="17"><circle cx="7" cy="4" r="3" fill="#7ab0d8"/><path d="M1 16l5-9 4 9z" fill="#9cd0c8"/><path d="M10 16l2-6 3 6z" fill="#e89030"/></svg>
<svg style="left:958px;top:745px" width="17" height="17"><path d="M1 8Q8-2 16 8z" fill="#1fa04a"/><path d="M8.500 8v8" stroke="#f4dfa0" stroke-width="1.500"/></svg>
<span class="t m" style="left:981px;top:748px;color:#dcecfb">18:52</span>

<!-- dialog -->
<div style="left:278px;top:125px;width:404px;height:332px;background:#0a3fd8;border-radius:6px 6px 0 0"></div>
<div style="left:278px;top:125px;width:404px;height:29px;border-radius:6px 6px 0 0;background:linear-gradient(#0a5fe8 0,#1d7af4 10%,#0553de 30%,#0555e2 75%,#0a6ef0 100%)"></div>
<span class="t" style="left:286px;top:133px;font:bold 13px/13px 'WenQuanYi Zen Hei','Noto Sans CJK SC',sans-serif;color:#fff">日期和时间</span>
<span class="t" style="left:363px;top:133px;font:bold 13px/13px 'WenQuanYi Zen Hei','Noto Sans CJK SC',sans-serif;color:#fff">属性</span>
<div style="left:633px;top:130px;width:19px;height:19px;border:1px solid #fff;border-radius:3px;background:linear-gradient(135deg,#6f9cf0,#2a5fd8)"></div>
<span class="t" style="left:636px;top:131px;font:bold 17px/18px 'Liberation Sans',sans-serif;color:#fff">?</span>
<div style="left:656px;top:130px;width:19px;height:19px;border:1px solid #fff;border-radius:3px;background:linear-gradient(135deg,#f08a6c,#d6401c)"></div>
<svg style="left:659px;top:133px" width="15" height="15"><path d="M2 2l10 10M12 2L2 12" stroke="#fff" stroke-width="2.600"/></svg>
<div style="left:281px;top:154px;width:398px;height:300px;background:#ece9d8"></div>

<div style="left:287px;top:179px;width:384px;height:240px;background:#f6f5ef;border:1px solid #96948a;box-sizing:border-box"></div>
<div style="left:290px;top:163px;width:68px;height:16px;background:#f3f1e7;border:1px solid #a5a396;border-bottom:0;border-radius:3px 3px 0 0"></div>
<span class="t" style="left:294px;top:165px">时间和日期</span>
<div style="left:359px;top:160px;width:50px;height:20px;background:#fbfaf4;border:1px solid #a5a396;border-bottom:0;border-top:2px solid #e8a030;border-radius:3px 3px 0 0"></div>
<span class="t" style="left:366px;top:164px">时区</span>
<div style="left:411px;top:163px;width:84px;height:16px;background:#f3f1e7;border:1px solid #a5a396;border-bottom:0;border-radius:3px 3px 0 0"></div>
<span class="t m" style="left:414px;top:167px">Internet</span>
<span class="t" style="left:468px;top:166px">时间</span>

<div style="left:299px;top:188px;width:362px;height:19px;background:#fff;border:1px solid #9db0c6;box-sizing:border-box"></div>
<div style="left:302px;top:190px;width:339px;height:14px;background:#3468c8;outline:1px dotted #111;outline-offset:-1px"></div>
<span class="t" style="left:304px;top:191px;color:#b4c9f0">(GMT+08:00) 北京，重庆，香港特别行政区，乌鲁木齐</span>
<div style="left:644px;top:190px;width:15px;height:15px;background:#c9d7f4;border-radius:2px"></div>
<svg style="left:646px;top:194px" width="11" height="8"><path d="M1 1l4.500 4.500L10 1" fill="none" stroke="#35508a" stroke-width="2"/></svg>

<svg style="left:301px;top:208px" width="357" height="185"><use href="#map" width="357" height="185"/></svg>

<div class="btn" style="left:437px;border-color:#2c6bb8;box-shadow:inset 0 0 0 2px #a8c4ee"></div>
<span class="t" style="left:461px;top:431px">确定</span>
<div class="btn" style="left:518px"></div>
<span class="t" style="left:542px;top:431px">取消</span>
<div class="btn" style="left:599px;border-color:#c9c7ba;background:#ece9d8"></div>
<span class="t" style="left:613px;top:431px;color:#9e9c90">应用 <span class="k">(A)</span></span>
</div>
</body></html>
